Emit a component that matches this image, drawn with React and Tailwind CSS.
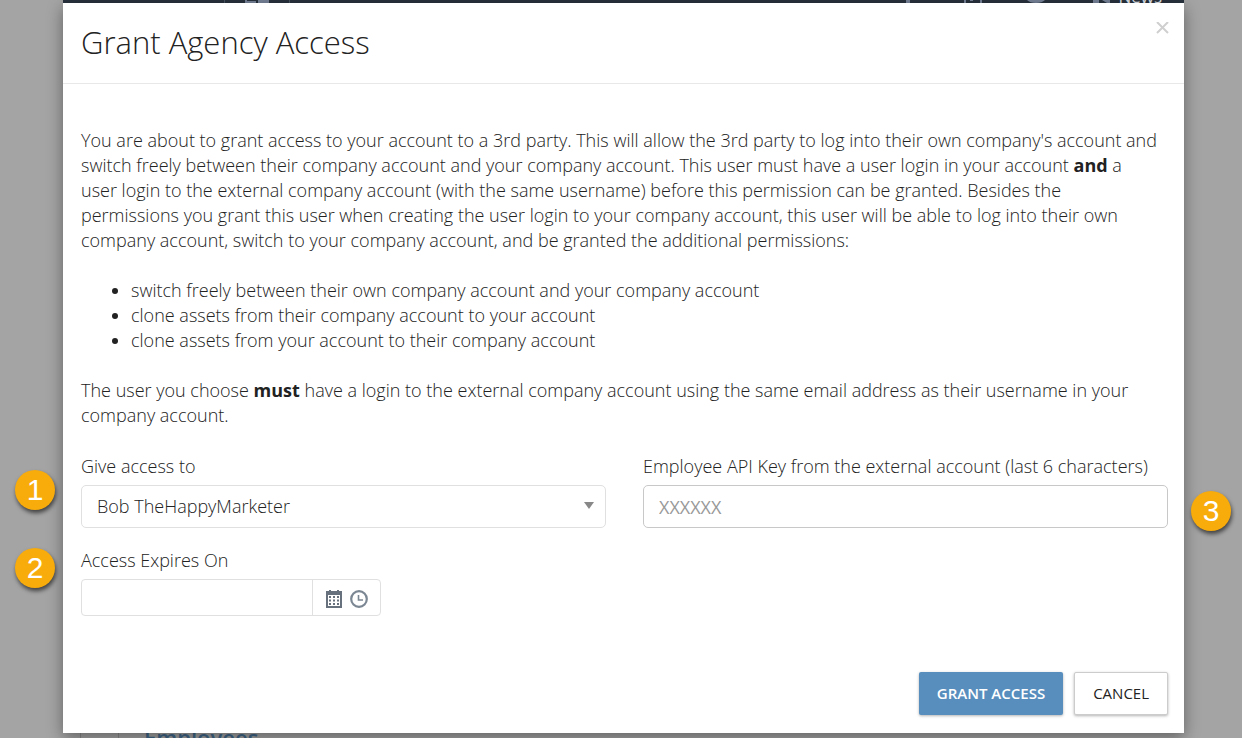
import { useState } from 'react';
import clsx from 'clsx';

const PERMISSIONS = [
  'switch freely between their own company account and your company account',
  'clone assets from their company account to your account',
  'clone assets from your account to their company account'
];

const StepBadge = ({ number, className }) => (
  <span
    className={clsx(
      'absolute flex size-10 items-center justify-center rounded-full bg-[#f8ac0c] font-["Liberation_Sans",sans-serif] text-[30px] leading-10 font-normal text-white shadow-[1px_3px_4px_rgba(0,0,0,0.6)]',
      className
    )}
  >
    {number}
  </span>
);

const CalendarIcon = () => (
  <svg viewBox="0 0 16 18" className="h-[18px] w-4">
    <path d="M0 1h16v17H0zM3 0h2v1H3zM11 0h2v1h-2z" fill="#66717d" />
    <path d="M2 5h12v11H2z" fill="#fff" />
    <path
      d="M3 6h2v2H3zM7 6h2v2H7zM11 6h2v2h-2zM3 9.5h2v2H3zM7 9.5h2v2H7zM11 9.5h2v2h-2zM3 13h2v2H3zM7 13h2v2H7zM11 13h2v2h-2z"
      fill="#66717d"
    />
  </svg>
);

const ClockIcon = () => (
  <svg viewBox="0 0 18 18" className="size-[18px]" fill="none" stroke="#7b8793">
    <circle cx="9" cy="9" r="7.8" strokeWidth="2.2" />
    <path d="M8.5 5v5H13" strokeWidth="1.6" />
  </svg>
);

const NavStrip = () => (
  <div className="ml-[63px] mr-[58px] flex h-[3px] items-end justify-between overflow-hidden bg-[#28323e]">
    <div className="ml-[161px] flex h-[3px] w-[66px] justify-center border-x border-[#485462]">
      <svg viewBox="0 0 24 3" className="h-[3px] w-6">
        <path d="M0 0h2v1h9v2H0zM13 0h11v3H13z" fill="#77839a" />
      </svg>
    </div>
    <div className="mr-[22px] flex h-[3px] items-end">
      <svg viewBox="0 0 208 3" className="h-[3px] w-52" fill="#77839a">
        <path d="M0 0h4v3H0zM58 0h2v3h-2zM64 0h3v1h-3zM74 0h2v3h-2zM121 0h18q-3 3-9 3t-9-3zM187 0h6v3h-6zM196 0h8v3h-3z" />
      </svg>
      <span className="ml-1 flex h-[3px] flex-col justify-end text-[17px] leading-[13px] font-normal text-[#e2e6eb]">
        News
      </span>
    </div>
  </div>
);

const App = () => {
  const [user, setUser] = useState('bob');
  const [apiKey, setApiKey] = useState('');
  const [expires, setExpires] = useState('');

  return (
    <div className='flex min-h-screen flex-col overflow-hidden bg-[#a4a4a4] font-["Open_Sans",sans-serif] text-lg leading-[25px] font-light text-[#222]'>
      <NavStrip />

      <div
        role="dialog"
        aria-labelledby="dialog-title"
        className="relative ml-[63px] mr-[58px] bg-white shadow-[0_5px_15px_rgba(0,0,0,0.4)]"
      >
        <header className="flex items-start justify-between border-b border-[#e8e8e8] pb-[21px] pl-[18px] pr-[15px] pt-[19px]">
          <h1 id="dialog-title" className="text-[31px] leading-10">Grant Agency Access</h1>
          <button type="button" aria-label="Close" className="size-3.5">
            <svg viewBox="0 0 14 14" className="size-3.5" stroke="#cfcfcf" strokeWidth="2">
              <path d="M2 0l11 11M13 0L2 11" />
            </svg>
          </button>
        </header>

        <div className="pl-[18px] pr-4 pt-11">
          <p className="pr-2">
            You are about to grant access to your account to a 3rd party. This will allow the 3rd party to log into
            their own company's account and switch freely between their company account and your company account. This
            user must have a user login in your account <b className="font-bold">and</b> a user login to the external
            company account (with the same username) before this permission can be granted. Besides the
            permissions&nbsp;you grant this user when creating the user login to your company account, this user will
            be able to log into their own company account, switch to your company account, and be granted the
            additional permissions:
          </p>
          <ul className="my-[25px] list-disc pl-[50px]">
            {PERMISSIONS.map((permission) => (
              <li key={permission}>{permission}</li>
            ))}
          </ul>
          <p>
            The user you choose <b className="font-bold">must</b> have a login to the external company account using
            the same email address as their username in your company account.
          </p>

          <div className="mt-[26px] grid grid-cols-2 gap-x-[37px] gap-y-5">
            <div className="relative">
              <StepBadge number={1} className="-left-[66px] top-4" />
              <label htmlFor="user" className="block">Give access to</label>
              <div className="relative mt-1.5">
                <select
                  id="user"
                  value={user}
                  onChange={(e) => setUser(e.target.value)}
                  className="block h-[43px] w-full appearance-none rounded-[5px] border border-[#e0e0e0] bg-white px-[15px]"
                >
                  <option value="bob">Bob TheHappyMarketer</option>
                </select>
                <svg viewBox="0 0 10 7" className="pointer-events-none absolute right-3 top-[17px] h-[7px] w-2.5">
                  <path d="M0 0h10L5 7z" fill="#888" />
                </svg>
              </div>
            </div>

            <div className="relative">
              <StepBadge number={3} className="-right-[63px] top-[37px]" />
              <label htmlFor="api-key" className="block">
                Employee API Key from the external account (last 6 characters)
              </label>
              <input
                id="api-key"
                type="text"
                placeholder="XXXXXX"
                value={apiKey}
                onChange={(e) => setApiKey(e.target.value)}
                className="mt-1.5 block h-[43px] w-full rounded-[5px] border border-[#c8c8c8] px-[15px] font-normal placeholder:text-[#999]"
              />
            </div>

            <div className="relative">
              <StepBadge number={2} className="-left-[66px] top-0" />
              <label htmlFor="expires" className="block">Access Expires On</label>
              <div className="mt-1.5 flex h-[37px] w-[300px] rounded border border-[#e0e0e0]">
                <input
                  id="expires"
                  type="text"
                  value={expires}
                  onChange={(e) => setExpires(e.target.value)}
                  className="min-w-0 flex-1 px-[15px]"
                />
                <div className="flex items-center gap-2 border-l border-[#e0e0e0] pl-[13px] pr-3 pt-0.5">
                  <button type="button" aria-label="Pick a date"><CalendarIcon /></button>
                  <button type="button" aria-label="Pick a time"><ClockIcon /></button>
                </div>
              </div>
            </div>
          </div>
        </div>

        <footer className="flex justify-end gap-[11px] pb-[18px] pr-4 pt-14 text-[15px]">
          <button
            type="button"
            className="h-[43px] rounded-xs bg-[#578ebe] px-[18px] font-semibold text-white shadow-[0_1px_3px_rgba(0,0,0,0.3)]"
          >
            GRANT ACCESS
          </button>
          <button
            type="button"
            className="h-[43px] rounded-xs border border-[#ccc] bg-white px-[18px] font-normal shadow-[0_1px_3px_rgba(0,0,0,0.3)]"
          >
            CANCEL
          </button>
        </footer>
      </div>

      <div className="ml-20 flex h-[5px] overflow-hidden">
        <div className="h-[5px] w-[39px] border-x border-[#8a8a8a]" />
        <a href="#employees" className="ml-[25px] h-[5px] text-[22px] leading-[9px] font-semibold text-[#41688b]">
          Employees
        </a>
      </div>
    </div>
  );
};

export default App;
